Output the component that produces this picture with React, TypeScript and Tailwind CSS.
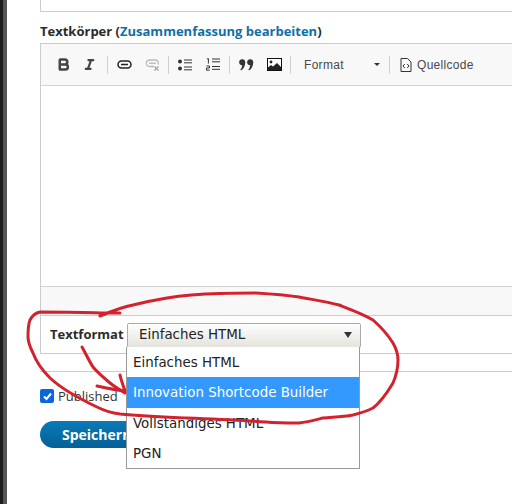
import { Bold, Italic } from "lucide-react";

const sans = "font-['Open_Sans','Noto_Sans',sans-serif]";

function Sep() {
  return <span className="w-px h-[18px] bg-[#d0d0d0] ml-[2px]" />;
}

function Cell({ children, w = "w-[28px]" }: { children: React.ReactNode; w?: string }) {
  return <span className={`${w} h-[20px] flex items-center justify-center`}>{children}</span>;
}

function LinkIcon() {
  return (
    <svg width="15" height="9" viewBox="0 0 15 9" fill="none" stroke="#222" strokeWidth="1.5">
      <rect x="1" y="1" width="13" height="7" rx="3.5" />
      <path d="M4 4.5h7" />
    </svg>
  );
}

function UnlinkIcon() {
  return (
    <svg width="15" height="12" viewBox="0 0 15 12" fill="none" stroke="#b8b8b8" strokeWidth="1.3">
      <path d="M9 7.5H4.5a3 3 0 0 1 0-6.5h6a3 3 0 0 1 2.5 4.5" />
      <path d="M4 4.2h7" />
      <path d="M9.5 7.5l4 4M13.5 7.5l-4 4" stroke="#a5a5a5" />
    </svg>
  );
}

function BulletList() {
  return (
    <svg width="14" height="12" viewBox="0 0 14 12" fill="#333">
      <circle cx="2" cy="2.5" r="2" />
      <circle cx="2" cy="9.5" r="2" />
      <rect x="6" y="0.5" width="8" height="1" />
      <rect x="6" y="3.3" width="8" height="1" />
      <rect x="6" y="7.5" width="8" height="1" />
      <rect x="6" y="10.3" width="8" height="1" />
    </svg>
  );
}

function NumberedList() {
  return (
    <svg width="14" height="13" viewBox="0 0 14 13" fill="none" stroke="#333" strokeWidth="1">
      <path d="M1 1 2.4 .5V5.5" />
      <path d="M.5 8h3v2H.5v2.2h3.2" />
      <path d="M6 1h8M6 3.8h8M6 8.5h8M6 11.3h8" />
    </svg>
  );
}

function Quote() {
  return (
    <svg width="15" height="12" viewBox="0 0 15 12" fill="#333">
      <circle cx="3.2" cy="3.2" r="3" />
      <path d="M6.2 3.2C6.2 7 4.5 10 2 11.6L1.4 10.6C2.6 9.4 3 8 3 6.4z" />
      <circle cx="11.2" cy="3.2" r="3" />
      <path d="M14.2 3.2C14.2 7 12.5 10 10 11.6L9.4 10.6C10.6 9.4 11 8 11 6.4z" />
    </svg>
  );
}

function ImageIcon() {
  return (
    <svg width="15" height="13" viewBox="0 0 15 13">
      <rect x="0.5" y="0.5" width="14" height="12" fill="#fff" stroke="#111" />
      <circle cx="4" cy="4" r="1.4" fill="#222" />
      <path d="M1 12V9.5L4 7l2 1.5L10 5l4 4v3z" fill="#222" />
    </svg>
  );
}

function SourceIcon() {
  return (
    <svg width="12" height="14" viewBox="0 0 12 14" fill="none" stroke="#333" strokeWidth="1">
      <path d="M1 .5h6.5L11 4v9.5H1z" />
      <path d="M4.8 6 3 8l1.8 2M7.2 6 9 8l-1.8 2" />
    </svg>
  );
}

export default function App() {
  return (
    <div className={`relative w-[512px] h-[504px] overflow-hidden bg-white flex ${sans}`}>
      <div className="w-[3px] bg-[#1c1c1c]" />
      <div className="w-[4px] bg-[#555]" />

      <div className="flex-1 pl-[33px]">
        <div className="h-[12px] -mr-4 border border-t-0 border-[#ccc]" />

        <div className="mt-[10px] h-[21px] text-[13px] leading-[19px] font-bold text-[#2b2b2b]">
          Textkörper (<span className="text-[#0f6fa8]">Zusammenfassung bearbeiten</span>)
        </div>

        <div className="-mr-4 border border-[#ccc]">
          <div className="h-[42px] bg-[#f8f8f8] border-b border-[#d2d2d2] flex items-center pl-[9px]">
            <Cell w="w-[26px]"><Bold size={15} strokeWidth={4} className="text-[#444]" /></Cell>
            <Cell w="w-[26px]"><Italic size={13} strokeWidth={4} className="text-[#444]" /></Cell>
            <span className="w-[3px]" />
            <Sep />
            <span className="w-[2px]" />
            <Cell><LinkIcon /></Cell>
            <Cell><UnlinkIcon /></Cell>
            <Sep />
            <span className="w-[2px]" />
            <Cell><BulletList /></Cell>
            <Cell><NumberedList /></Cell>
            <Sep />
            <span className="w-[2px]" />
            <Cell><Quote /></Cell>
            <Cell><ImageIcon /></Cell>
            <Sep />
            <span className="ml-[13px] w-[70px] font-['Liberation_Sans',sans-serif] tracking-[0.3px] text-[12px] text-[#484848]">Format</span>
            <span className="w-0 h-0 border-x-[3px] border-x-transparent border-t-[3px] border-t-[#333]" />
            <span className="w-[7px]" />
            <Sep />
            <span className="ml-[10px]"><SourceIcon /></span>
            <span className="ml-[5px] font-['Liberation_Sans',sans-serif] tracking-[0.3px] text-[12px] text-[#484848]">Quellcode</span>
          </div>
          <div className="h-[200px] bg-white" />
          <div className="h-[29px] bg-[#f8f8f8] border-t border-[#d2d2d2]" />
        </div>

        <div className="-mr-4 h-[38px] border border-t-0 border-[#ccc] pl-[9px] flex items-center">
          <span className="w-[77px] text-[13px] font-bold text-[#2b2b2b]">Textformat</span>
          <div className="mt-[1px] w-[234px] h-[25px] border border-[#aaa] rounded-[2px] bg-gradient-to-b from-[#fefefe] to-[#e4e3dc] pl-[11px] flex items-center justify-between pr-[8px]">
            <span className="font-['DejaVu_Sans',sans-serif] text-[13.4px] text-[#222]">Einfaches HTML</span>
            <span className="w-0 h-0 border-x-[4px] border-x-transparent border-t-[6px] border-t-[#333]" />
          </div>
        </div>

        <div className="-mr-4 mt-[17px] border-t border-[#ccc]" />

        <div className="mt-[15px] flex items-center h-[18px]">
          <span className="w-[14px] h-[14px] rounded-[2px] bg-[#0b66d8] flex items-center justify-center">
            <svg width="11" height="11" viewBox="0 0 11 11" fill="none" stroke="#fff" strokeWidth="2">
              <path d="M2 5.5 4.5 8 9 2.5" />
            </svg>
          </span>
          <span className="ml-[4px] mt-[2px] text-[13px] text-[#333]">Published</span>
        </div>

        <button className="mt-[16px] block w-[110px] h-[27px] rounded-[14px] bg-gradient-to-b from-[#0a7ab8] to-[#056196] text-left pl-[22px] text-[14px] font-bold text-white">
          Speichern
        </button>
      </div>

      <div className="absolute left-[126px] top-[347px] w-[234px] h-[122px] bg-white border border-[#999] border-t-0 font-['DejaVu_Sans',sans-serif] text-[13.4px] text-[#222] leading-[32px]">
        <div className="h-[30px] pl-[6px]">Einfaches HTML</div>
        <div className="h-[31px] pl-[6px] bg-[#3399ff] text-white">Innovation Shortcode Builder</div>
        <div className="h-[30px] pl-[6px]">Vollständiges HTML</div>
        <div className="h-[30px] pl-[6px]">PGN</div>
      </div>

      <svg className="absolute left-0 top-0 pointer-events-none" width="512" height="504" fill="none" stroke="#d3212d" strokeWidth="3" strokeLinecap="round" strokeLinejoin="round">
        <path d="M100 316C112 311 122 307 133 305C145 302 155 300 167 298C185 295 200 294 220 293.5C235 293 245 293 256 293C272 294 285 295 299 297C315 300 328 302 339 305C352 310 363 314 373 320C382 328 388 335 393 343C397 350 398 355 398 360C398 368 396 376 393 383C387 393 381 402 373 408C367 411 361 413 353 415C342 417 333 417 323 418C315 420 308 422 299 423C288 423 277 423 266 422C240 420 212 419 187 418C165 417 142 416 120 414C112 413 105 411 97 407C80 399 63 390 50 378C40 368 36 361 33 353C30 347 28 342 28 337C28 331 28 325 30 320C32 316 35 313 40 312C60 312 80 312 100 313C107 313 114 313 120 313" />
        <path d="M82 347C86 354 89 361 93 367C98 373 104 378 110 383C115 387 120 390 125 393" />
        <path d="M120 375C121 380 123 385 125 391C116 390 106 388 97 386" />
      </svg>
    </div>
  );
}
